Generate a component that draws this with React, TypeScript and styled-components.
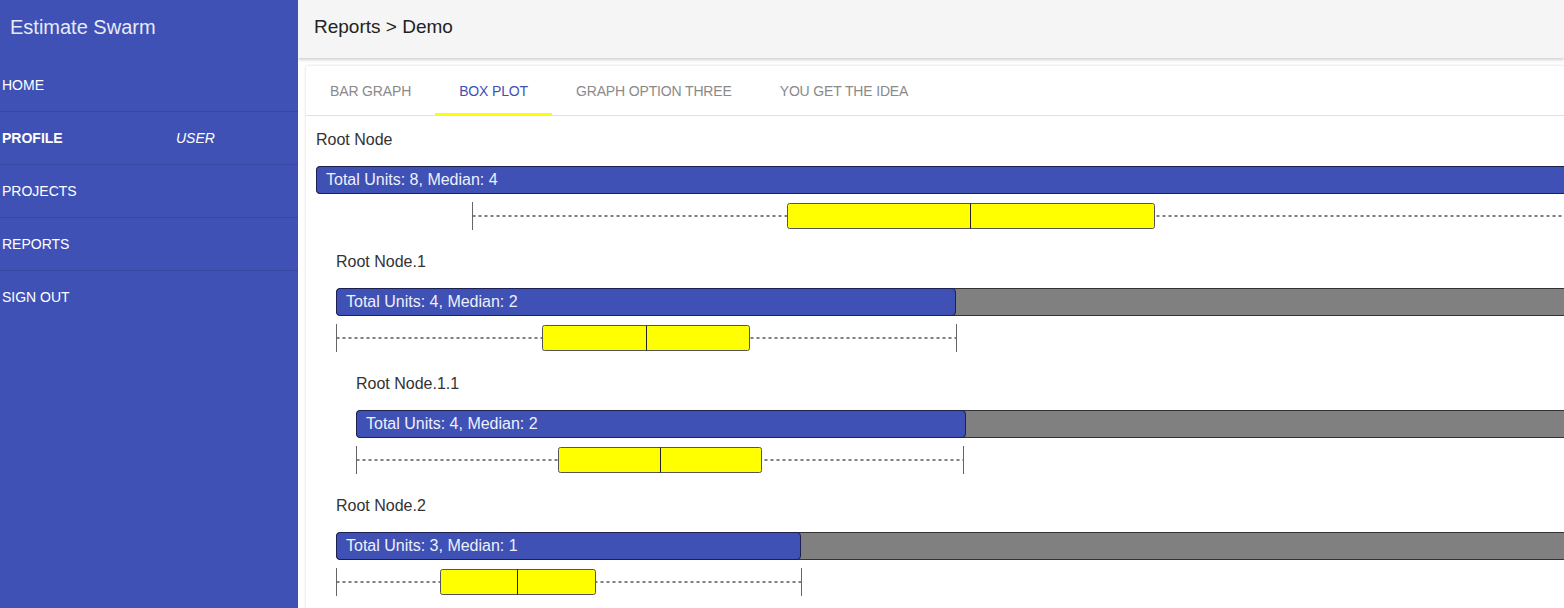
import React, { useState } from "react";
import styled, { createGlobalStyle } from "styled-components";

interface PlotData {
  lo: number;
  q1: number;
  med: number;
  q3: number;
  hi: number;
}

interface NodeData {
  name: string;
  units: number;
  median: number;
  plot: PlotData;
  children?: NodeData[];
}

const TOTAL_UNITS = 8;
const TREE_WIDTH = 1260;
const INDENT = 20;

const tree: NodeData = {
  name: "Root Node",
  units: 8,
  median: 4,
  plot: { lo: 156, q1: 471, med: 654, q3: 838, hi: 1258 },
  children: [
    {
      name: "Root Node.1",
      units: 4,
      median: 2,
      plot: { lo: 0, q1: 206, med: 310, q3: 413, hi: 620 },
      children: [
        {
          name: "Root Node.1.1",
          units: 4,
          median: 2,
          plot: { lo: 0, q1: 202, med: 304, q3: 405, hi: 607 },
        },
      ],
    },
    {
      name: "Root Node.2",
      units: 3,
      median: 1,
      plot: { lo: 0, q1: 104, med: 181, q3: 259, hi: 465 },
    },
  ],
};

const tabs = ["Bar Graph", "Box Plot", "Graph Option Three", "You Get The Idea"];

const BoxPlot: React.FC<{ plot: PlotData; width: number }> = ({ plot, width }) => {
  const { lo, q1, med, q3, hi } = plot;
  const x = (v: number) => Math.min(v, width - 1) + 0.5;
  return (
    <PlotSvg width={width} height={28}>
      <line x1={x(lo)} y1={14} x2={x(hi)} y2={14} stroke="#808080" strokeWidth={2} strokeDasharray="3 3" />
      <line x1={x(lo)} y1={0} x2={x(lo)} y2={28} stroke="#666" strokeWidth={1} />
      <line x1={x(hi)} y1={0} x2={x(hi)} y2={28} stroke="#666" strokeWidth={1} />
      <rect x={x(q1)} y={1.5} width={q3 - q1} height={25} rx={2} fill="#ffff00" stroke="#555" strokeWidth={1} />
      <line x1={x(med)} y1={1.5} x2={x(med)} y2={26.5} stroke="#222" strokeWidth={1} />
    </PlotSvg>
  );
};

const TreeNode: React.FC<{ node: NodeData; depth: number }> = ({ node, depth }) => {
  const width = TREE_WIDTH - depth * INDENT;
  const fill = (node.units / TOTAL_UNITS) * width;
  return (
    <NodeBlock $indent={depth === 0 ? 0 : INDENT}>
      <NodeLabel>{node.name}</NodeLabel>
      <Track style={{ width }}>
        <Fill style={{ width: fill }}>
          Total Units: {node.units}, Median: {node.median}
        </Fill>
      </Track>
      <BoxPlot plot={node.plot} width={width} />
      {node.children?.map((c) => (
        <TreeNode key={c.name} node={c} depth={depth + 1} />
      ))}
    </NodeBlock>
  );
};

const App: React.FC = () => {
  const [active, setActive] = useState(1);

  return (
    <>
      <GlobalStyle />
      <Shell>
        <Sidebar>
          <Brand>Estimate Swarm</Brand>
          <NavList>
            <NavItem>
              <NavLabel>Home</NavLabel>
            </NavItem>
            <NavItem>
              <NavLabel $bold>Profile</NavLabel>
              <NavMeta>User</NavMeta>
            </NavItem>
            <NavItem>
              <NavLabel>Projects</NavLabel>
            </NavItem>
            <NavItem>
              <NavLabel>Reports</NavLabel>
            </NavItem>
            <NavItem $last>
              <NavLabel>Sign Out</NavLabel>
            </NavItem>
          </NavList>
        </Sidebar>
        <Main>
          <TopBar>
            <Crumb>Reports &gt; Demo</Crumb>
          </TopBar>
          <Card>
            <TabBar>
              {tabs.map((t, i) => (
                <Tab key={t} $active={i === active} onClick={() => setActive(i)}>
                  {t}
                </Tab>
              ))}
            </TabBar>
            <Tree>
              <TreeNode node={tree} depth={0} />
            </Tree>
          </Card>
        </Main>
      </Shell>
    </>
  );
};

const GlobalStyle = createGlobalStyle`
  html, body {
    margin: 0;
    padding: 0;
    overflow: hidden;
    background: #ffffff;
    font-family: "Liberation Sans", Arial, sans-serif;
  }
`;

const Shell = styled.div`
  display: flex;
  width: 1564px;
  height: 608px;
  overflow: hidden;
`;

const Sidebar = styled.nav`
  flex: 0 0 298px;
  display: flex;
  flex-direction: column;
  background-color: #3f51b5;
  color: #ffffff;
`;

const Brand = styled.div`
  height: 59px;
  display: flex;
  align-items: center;
  padding-left: 10px;
  padding-bottom: 4px;
  box-sizing: border-box;
  font-size: 20px;
  color: #e8eaf6;
`;

const NavList = styled.ul`
  list-style: none;
  margin: 0;
  padding: 0;
`;

const NavItem = styled.li<{ $last?: boolean }>`
  height: 53px;
  display: flex;
  align-items: center;
  padding-left: 2px;
  padding-bottom: 1px;
  box-sizing: border-box;
  border-bottom: ${(p) => (p.$last ? "none" : "1px solid rgba(0, 0, 0, 0.12)")};
  font-size: 14px;
  text-transform: uppercase;
  cursor: pointer;
`;

const NavLabel = styled.span<{ $bold?: boolean }>`
  width: 174px;
  font-weight: ${(p) => (p.$bold ? 700 : 400)};
`;

const NavMeta = styled.span`
  font-style: italic;
`;

const Main = styled.main`
  flex: 1;
  min-width: 0;
  display: flex;
  flex-direction: column;
  overflow: hidden;
`;

const TopBar = styled.header`
  flex: 0 0 58px;
  display: flex;
  align-items: center;
  padding-left: 16px;
  padding-bottom: 4px;
  box-sizing: border-box;
  background-color: #f5f5f5;
  box-shadow: 0 2px 3px rgba(0, 0, 0, 0.18);
  position: relative;
  z-index: 1;
`;

const Crumb = styled.h1`
  margin: 0;
  font-size: 19px;
  font-weight: 400;
  color: #222;
`;

const Card = styled.section`
  margin: 8px 0 0 8px;
  width: 1290px;
  flex: 1;
  background: #ffffff;
  box-shadow: 0 0 3px rgba(0, 0, 0, 0.16);
`;

const TabBar = styled.div`
  display: flex;
  height: 50px;
  border-bottom: 1px solid #e0e0e0;
  box-sizing: border-box;
`;

const Tab = styled.button<{ $active?: boolean }>`
  padding: 2px 24px 0;
  border: none;
  background: transparent;
  border-bottom: 2px solid ${(p) => (p.$active ? "#ffff00" : "transparent")};
  color: ${(p) => (p.$active ? "#3f51b5" : "#8a8a8a")};
  font-family: "Liberation Sans", Arial, sans-serif;
  font-size: 14px;
  letter-spacing: -0.15px;
  text-transform: uppercase;
  cursor: pointer;
`;

const Tree = styled.div`
  padding: 0 10px;
`;

const NodeBlock = styled.div<{ $indent: number }>`
  display: flex;
  flex-direction: column;
  align-items: flex-start;
  margin-left: ${(p) => p.$indent}px;
`;

const NodeLabel = styled.div`
  margin: 14px 0 16px;
  line-height: 20px;
  font-size: 16px;
  color: #333;
`;

const Track = styled.div`
  height: 28px;
  box-sizing: border-box;
  background-color: #808080;
  border: 1px solid #333;
  border-radius: 4px;
  display: flex;
`;

const Fill = styled.div`
  margin: -1px 0 0 -1px;
  height: 28px;
  box-sizing: border-box;
  background-color: #3f51b5;
  border: 1px solid #1c2050;
  border-radius: 4px;
  padding-left: 9px;
  line-height: 26px;
  font-size: 16px;
  color: #eef0fa;
  white-space: nowrap;
  overflow: hidden;
`;

const PlotSvg = styled.svg`
  display: block;
  margin: 8px 0;
`;

export default App;
